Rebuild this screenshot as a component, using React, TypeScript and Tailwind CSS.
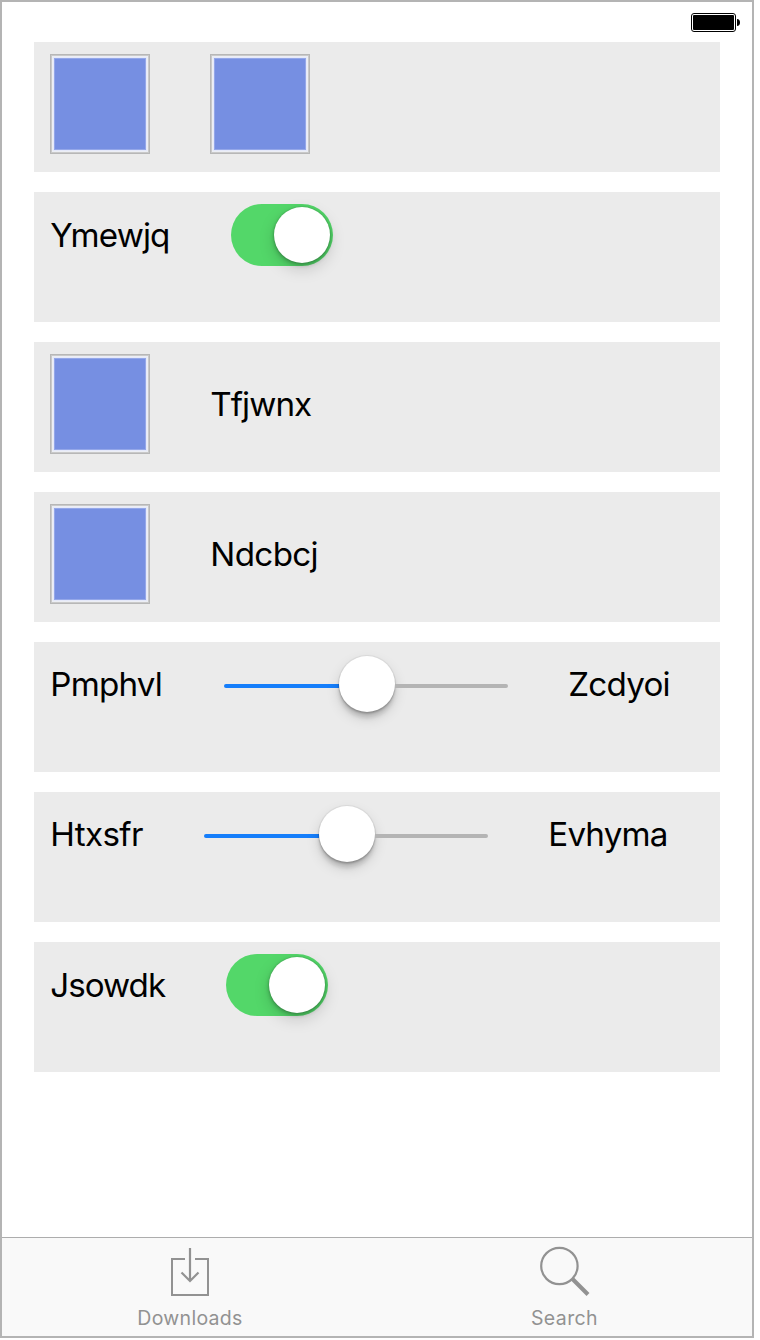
import type { ReactNode } from "react";

function Card({ height, children }: { height: string; children: ReactNode }) {
  return (
    <section className="h-[130px] bg-[#ebebeb] px-4 pt-3">
      <div className={`flex items-center gap-[60px] ${height}`}>{children}</div>
    </section>
  );
}

function Label({ text, className }: { text: string; className: string }) {
  return (
    <span className={`shrink-0 whitespace-nowrap pl-[0.3px] text-[33.2px] leading-10 text-black ${className}`}>
      {text}
    </span>
  );
}

function Swatch() {
  return (
    <div className="size-[100px] shrink-0 border border-[#b7b7b7] bg-[#eceef4]">
      <div className="size-full border border-[#c9c9c9] p-px">
        <div className="size-full border border-[#e5e9fa]">
          <div className="size-full border border-[#94a7e9] bg-[#768fe2]" />
        </div>
      </div>
    </div>
  );
}

function Toggle() {
  return (
    <div
      role="switch"
      aria-checked="true"
      className="flex h-[62px] w-[102px] shrink-0 items-center justify-end rounded-full bg-[#53d769] pr-[3px]"
    >
      <div className="size-14 rounded-full bg-white shadow-[0_6px_16px_rgba(0,0,0,0.17),0_2px_4px_rgba(0,0,0,0.25),0_0_2px_rgba(0,0,0,0.2)]" />
    </div>
  );
}

function Slider() {
  return (
    <div className="flex h-[60px] w-[284px] shrink-0 items-center">
      <div className="mt-1 h-1 w-[115px] rounded-l-full bg-[#157efb]" />
      <div className="size-14 rounded-full bg-white shadow-[0_6px_14px_rgba(0,0,0,0.14),0_6px_4px_rgba(0,0,0,0.13),0_2px_2px_rgba(0,0,0,0.18),0_0_1px_1px_rgba(0,0,0,0.06)]" />
      <div className="mt-1 h-1 w-[113px] rounded-r-full bg-[#b4b4b4]" />
    </div>
  );
}

function Battery() {
  return (
    <svg width="50" height="20" viewBox="0 0 50 20" aria-hidden="true">
      <rect x="0.5" y="0.5" width="44" height="18" rx="2.5" fill="none" stroke="#000" />
      <rect x="2" y="2" width="41" height="15" rx="1" fill="#000" />
      <path d="M46 6Q49 6.2 49 9.5T46 13Z" fill="#000" />
    </svg>
  );
}

function DownloadIcon() {
  return (
    <svg width="60" height="60" viewBox="0 0 60 60" fill="none" stroke="#929292" strokeWidth="2" aria-hidden="true">
      <path d="M25 21H12V57H48V21H35" />
      <path d="M30 10V43M21.5 34.5L30 43L38.5 34.5" strokeWidth="2.2" />
    </svg>
  );
}

function SearchIcon() {
  return (
    <svg width="60" height="60" viewBox="0 0 60 60" fill="none" stroke="#929292" aria-hidden="true">
      <circle cx="24.4" cy="28" r="18.2" strokeWidth="2.2" />
      <path d="M37.5 41L53 56.5" strokeWidth="4" />
    </svg>
  );
}

function Tab({ icon, text, className }: { icon: ReactNode; text: string; className: string }) {
  return (
    <button className="flex flex-1 flex-col items-center text-[#929292]">
      {icon}
      <span className={`mt-2 text-[19.5px] leading-6 ${className}`}>{text}</span>
    </button>
  );
}

export default function App() {
  return (
    <div className="h-[1340px] w-[760px] bg-white font-['Inter',sans-serif]">
      <div className="flex h-[1338px] w-[754px] flex-col border-2 border-[#b4b4b4] bg-white">
        <header className="flex h-10 shrink-0 justify-end pr-[11px] pt-[11px]">
          <Battery />
        </header>
        <main className="flex flex-1 flex-col gap-5 px-8">
          <Card height="h-[100px]">
            <Swatch />
            <Swatch />
          </Card>
          <Card height="h-[62px]">
            <Label text="Ymewjq" className="w-[121px] tracking-[-0.9px]" />
            <Toggle />
          </Card>
          <Card height="h-[100px]">
            <Swatch />
            <Label text="Tfjwnx" className="w-[102px] tracking-[-0.95px]" />
          </Card>
          <Card height="h-[100px]">
            <Swatch />
            <Label text="Ndcbcj" className="w-[110px] tracking-[-0.65px]" />
          </Card>
          <Card height="h-[60px]">
            <Label text="Pmphvl" className="w-[114px] tracking-[-0.8px]" />
            <Slider />
            <Label text="Zcdyoi" className="w-[104px] tracking-[-0.8px]" />
          </Card>
          <Card height="h-[60px]">
            <Label text="Htxsfr" className="w-[94px] tracking-[-0.65px]" />
            <Slider />
            <Label text="Evhyma" className="w-[120px] tracking-[-0.85px]" />
          </Card>
          <Card height="h-[62px]">
            <Label text="Jsowdk" className="w-[116px] tracking-[-1px]" />
            <Toggle />
          </Card>
        </main>
        <nav className="flex h-[99px] shrink-0 border-t border-[#adadad] bg-[#f9f9f9]">
          <Tab icon={<DownloadIcon />} text="Downloads" className="pl-px tracking-[0.3px]" />
          <Tab icon={<SearchIcon />} text="Search" className="tracking-[0.4px]" />
        </nav>
      </div>
    </div>
  );
}
